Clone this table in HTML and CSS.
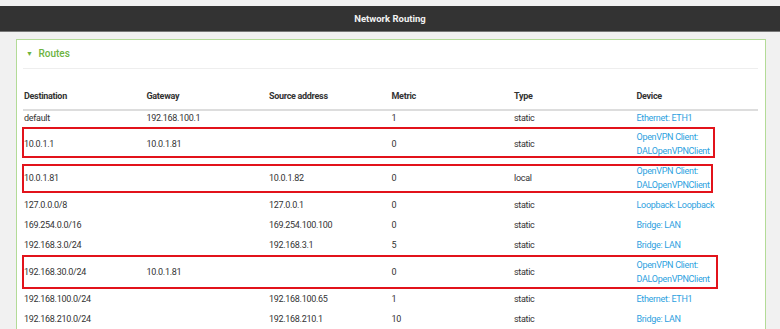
FILE: index.html
```html
<!DOCTYPE html>
<html lang="en">
<head>
  <meta charset="UTF-8" />
  <meta name="viewport" content="width=device-width, initial-scale=1" />
  <title>Network Routing</title>
  <link rel="stylesheet" href="styles.css">
</head>
<body>
  <div class="topbar">Network Routing</div>

  <div class="panel">
    <div class="panel-title"><span class="caret">&#9660;</span> Routes</div>

    <div class="tablewrap">
      <table class="routes">
        <thead>
          <tr>
            <th>Destination</th>
            <th>Gateway</th>
            <th>Source address</th>
            <th>Metric</th>
            <th>Type</th>
            <th>Device</th>
          </tr>
        </thead>
        <tbody>
          <tr>
            <td>default</td><td>192.168.100.1</td><td></td><td>1</td><td>static</td>
            <td><a href="#">Ethernet: ETH1</a></td>
          </tr>
          <tr>
            <td>10.0.1.1</td><td>10.0.1.81</td><td></td><td>0</td><td>static</td>
            <td><a href="#">OpenVPN Client:<br>DALOpenVPNClient</a></td>
          </tr>
          <tr>
            <td>10.0.1.81</td><td></td><td>10.0.1.82</td><td>0</td><td>local</td>
            <td><a href="#">OpenVPN Client:<br>DALOpenVPNClient</a></td>
          </tr>
          <tr>
            <td>127.0.0.0/8</td><td></td><td>127.0.0.1</td><td>0</td><td>static</td>
            <td><a href="#">Loopback: Loopback</a></td>
          </tr>
          <tr>
            <td>169.254.0.0/16</td><td></td><td>169.254.100.100</td><td>0</td><td>static</td>
            <td><a href="#">Bridge: LAN</a></td>
          </tr>
          <tr>
            <td>192.168.3.0/24</td><td></td><td>192.168.3.1</td><td>5</td><td>static</td>
            <td><a href="#">Bridge: LAN</a></td>
          </tr>
          <tr>
            <td>192.168.30.0/24</td><td>10.0.1.81</td><td></td><td>0</td><td>static</td>
            <td><a href="#">OpenVPN Client:<br>DALOpenVPNClient</a></td>
          </tr>
          <tr>
            <td>192.168.100.0/24</td><td></td><td>192.168.100.65</td><td>1</td><td>static</td>
            <td><a href="#">Ethernet: ETH1</a></td>
          </tr>
          <tr>
            <td>192.168.210.0/24</td><td></td><td>192.168.210.1</td><td>10</td><td>static</td>
            <td><a href="#">Bridge: LAN</a></td>
          </tr>
        </tbody>
      </table>

      <!-- marcas rojas sobre las rutas VPN -->
      <div class="mark mark-1"></div>
      <div class="mark mark-2"></div>
      <div class="mark mark-3"></div>
    </div>
  </div>
</body>
</html>
```

FILE: styles.css
```css
body {
  font-family: Roboto, "Open Sans", sans-serif;
  background: #f1f1f1;
  margin: 0;
  padding: 0;
  color: #333;
}
.topbar {
  margin-top: 6px;
  height: 25px;
  line-height: 25px;
  background: #333;
  border-bottom: 1px solid #777;
  color: #f2f2f2;
  font-size: 9.5px;
  font-weight: bold;
  text-align: center;
}
.panel {
  width: 735px;
  margin: 7px 0 0 16px;
  padding: 0 7px 0 6px;
  background: #fff;
  border: 1px solid #b3db97;
}
.panel-title {
  height: 28px;
  line-height: 28px;
  padding-left: 3px;
  border-bottom: 1px solid #eee;
  color: #6db33f;
  font-size: 10px;
  font-weight: 500;
}
.caret {
  font-size: 7px;
  vertical-align: 1px;
  margin-right: 3px;
}
.tablewrap {
  position: relative;
  margin-top: 17px;
}
.routes {
  width: 735px;
  border-collapse: collapse;
  table-layout: fixed;
  font-size: 9px;
  line-height: 14px;
  letter-spacing: -0.3px;
}
.routes th {
  text-align: left;
  font-weight: bold;
  padding: 3px 0 6px 1px;
  border-bottom: 2px solid #ddd;
}
.routes td {
  padding: 3px 0 3px 1px;
  vertical-align: middle;
}
.routes tbody tr:first-child td {
  padding: 0 0 2px 1px;
}
.routes a {
  color: #2c9fe0;
  text-decoration: none;
}
.mark {
  position: absolute;
  left: -1px;
  border: 2px solid #e2131b;
  box-sizing: border-box;
}
.mark-1 { top: 41px; width: 693px; height: 31px; }
.mark-2 { top: 78px; width: 691px; height: 29px; }
.mark-3 { top: 169px; width: 696px; height: 34px; }
```
